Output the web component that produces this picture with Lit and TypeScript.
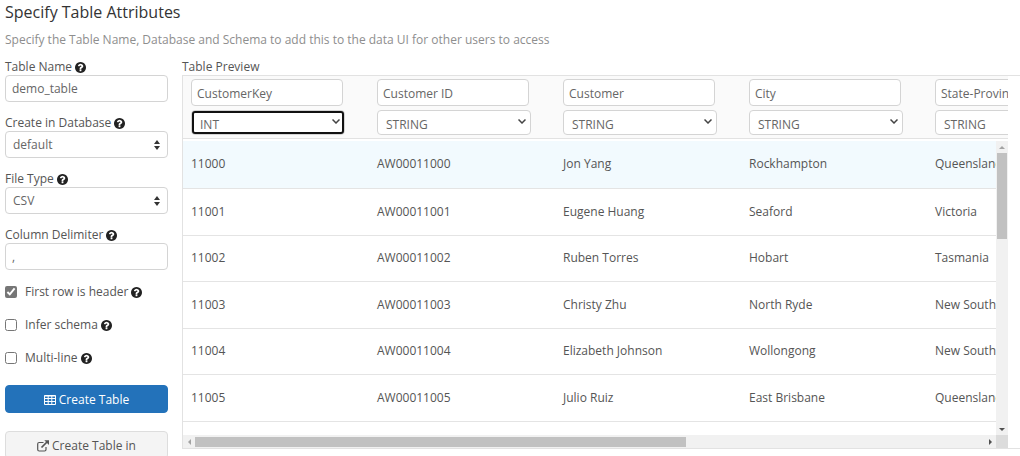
import { LitElement, html, css, svg } from "lit";
import { customElement } from "lit/decorators.js";

const COLUMNS = [
  { name: "CustomerKey", type: "INT" },
  { name: "Customer ID", type: "STRING" },
  { name: "Customer", type: "STRING" },
  { name: "City", type: "STRING" },
  { name: "State-Province", type: "STRING" },
];

const ROWS = [
  ["11000", "AW00011000", "Jon Yang", "Rockhampton", "Queensland"],
  ["11001", "AW00011001", "Eugene Huang", "Seaford", "Victoria"],
  ["11002", "AW00011002", "Ruben Torres", "Hobart", "Tasmania"],
  ["11003", "AW00011003", "Christy Zhu", "North Ryde", "New South Wales"],
  ["11004", "AW00011004", "Elizabeth Johnson", "Wollongong", "New South Wales"],
  ["11005", "AW00011005", "Julio Ruiz", "East Brisbane", "Queensland"],
];

const helpIcon = html`<svg class="help" viewBox="128 128 1536 1536" aria-hidden="true">${svg`<path fill="currentColor" d="M1024 1376v-192q0-14-9-23t-23-9h-192q-14 0-23 9t-9 23v192q0 14 9 23t23 9h192q14 0 23-9t9-23zm256-672q0-88-55.5-163t-138.5-116-170-41q-243 0-371 213-15 24 8 42l132 100q7 6 19 6 16 0 25-12 53-68 86-92 34-24 86-24 48 0 85.5 26t37.5 59q0 38-20 61t-68 45q-63 28-115.5 86.5t-52.5 125.5v36q0 14 9 23t23 9h192q14 0 23-9t9-23q0-19 21.5-49.5t54.5-49.5q32-18 49-28.5t46-35 44.5-48 28-60.5 12.5-81zm384 192q0 209-103 385.5t-279.5 279.5-385.5 103-385.5-103-279.5-279.5-103-385.5 103-385.5 279.5-279.5 385.5-103 385.5 103 279.5 279.5 103 385.5z"/>`}</svg>`;

const sortIcon = html`<svg class="mark sort" viewBox="0 0 6 10" aria-hidden="true"><path fill="currentColor" d="M0 4L3 0L6 4ZM0 6H6L3 10Z"/></svg>`;

const chevronIcon = html`<svg class="mark chevron" viewBox="0 0 8 5" aria-hidden="true"><path fill="none" stroke="currentColor" stroke-width="1.5" d="M.5 .5L4 4L7.5 .5"/></svg>`;

const arrow = (d: string) =>
  html`<svg class="arrow" viewBox="0 0 12 12" aria-hidden="true"><path fill="currentColor" d=${d} /></svg>`;

@customElement("app-root")
export class AppRoot extends LitElement {
  static styles = css`
    :host {
      display: block;
      max-height: 100vh;
      overflow: hidden;
      background: #fff;
      color: #555;
      font: 12px/16px "Open Sans", "Noto Sans", sans-serif;
    }
    * { box-sizing: border-box; }
    h1 {
      margin: 0;
      padding: 0 5px;
      font-size: 16px;
      line-height: 24px;
      font-weight: 400;
      color: #333;
    }
    .intro { margin: 8px 0 10px; padding: 0 5px; color: #8e8e8e; }
    .layout {
      display: grid;
      grid-template-columns: 163px minmax(0, 1fr);
      column-gap: 14px;
      padding-left: 5px;
      align-items: start;
    }
    .form { display: flex; flex-direction: column; }
    .field { display: flex; flex-direction: column; padding-top: 1px; margin-bottom: 12px; }
    .caption { display: flex; align-items: center; gap: 3px; }
    .help { width: 11px; height: 11px; color: #222; }
    input, select, button { font: inherit; color: #666; margin: 0; }
    .box {
      width: 100%;
      height: 27px;
      border: 1px solid #d4d4d4;
      border-radius: 4px;
      background: #fff;
      padding: 0 6px;
      outline: none;
      appearance: none;
    }
    .pick { display: grid; align-items: center; }
    .pick > * { grid-area: 1 / 1; }
    .pick .box { padding: 0 7px; }
    .mark { justify-self: end; pointer-events: none; }
    .sort { width: 6px; height: 10px; margin-right: 8px; color: #333; }
    .chevron { width: 8px; height: 5px; margin: 0 5px 3px 0; color: #444; }
    .checks { display: flex; flex-direction: column; gap: 17px; padding: 2px 0 19px; }
    .tick { display: flex; align-items: center; gap: 8px; height: 16px; }
    .tick input { width: 12px; height: 12px; accent-color: #767676; }
    .actions { display: flex; flex-direction: column; gap: 18px; }
    .btn {
      display: flex;
      align-items: center;
      justify-content: center;
      gap: 3px;
      height: 28px;
      border: 1px solid #ddd;
      border-radius: 4px;
      background: #f4f4f4;
      color: #555;
      padding: 2px 0 0;
    }
    .btn.primary { background: #2372ba; border-color: #2372ba; color: #fff; }
    .btn svg { width: 12px; height: 12px; }
    .preview { min-width: 0; padding-top: 1px; }
    .frame {
      border: 1px solid #e2e2e2;
      border-right: 0;
      padding-right: 12px;
    }
    .head { overflow: hidden; background: #fafafa; border-bottom: 1px solid #e2e2e2; }
    table { table-layout: fixed; border-collapse: collapse; width: 930px; }
    th, td { width: 186px; padding: 0 8px; text-align: left; font-weight: 400; }
    th { padding: 3px 24px 3px 8px; }
    .cell { display: flex; flex-direction: column; gap: 4px; }
    .cell > .box { width: 152px; padding: 1px 5px 0; }
    .cell .pick .box { height: 25px; padding: 4px 8px 0; }
    .current .box { outline: 2px solid #111; outline-offset: -3px; }
    .scroller {
      display: grid;
      grid-template-columns: minmax(0, 1fr) 12px;
      grid-template-rows: 294px 13px;
      padding-top: 2px;
    }
    .body { overflow: hidden; }
    .body td { height: 47px; border-bottom: 1px solid #e4e4e4; }
    .body tr:nth-child(2n + 3) td { height: 46px; }
    .body tr:first-child { background: #f2fafe; }
    .bar { display: flex; background: #f1f1f1; color: #505050; justify-content: space-between; align-items: center; }
    .bar.down { flex-direction: column; }
    .thumb { background: #c1c1c1; }
    .down .thumb { width: 10px; height: 86px; margin-bottom: auto; }
    .across .thumb { height: 10px; width: 60.4%; margin-right: auto; }
    .arrow { width: 12px; height: 12px; flex: none; }
    .arrow:first-child { color: #a3a3a3; }
    .corner { background: #dcdcdc; }
  `;

  private select(id: string, value: string, icon: unknown, label: string) {
    return html`<select class="box" id=${id} aria-label=${label}><option>${value}</option></select>${icon}`;
  }

  private tick(id: string, label: string, checked = false) {
    return html`<div class="tick">
      <input type="checkbox" id=${id} .checked=${checked} />
      <label class="caption" for=${id}>${label} ${helpIcon}</label>
    </div>`;
  }

  render() {
    return html`
      <h1>Specify Table Attributes</h1>
      <p class="intro">Specify the Table Name, Database and Schema to add this to the data UI for other users to access</p>
      <div class="layout">
        <form class="form">
          <div class="field">
            <label class="caption" for="name">Table Name ${helpIcon}</label>
            <input class="box" id="name" .value=${"demo_table"} />
          </div>
          <div class="field">
            <label class="caption" for="db">Create in Database ${helpIcon}</label>
            <div class="pick">${this.select("db", "default", sortIcon, "Create in Database")}</div>
          </div>
          <div class="field">
            <label class="caption" for="type">File Type ${helpIcon}</label>
            <div class="pick">${this.select("type", "CSV", sortIcon, "File Type")}</div>
          </div>
          <div class="field">
            <label class="caption" for="delim">Column Delimiter ${helpIcon}</label>
            <input class="box" id="delim" .value=${","} />
          </div>
          <div class="checks">
            ${this.tick("header", "First row is header", true)}
            ${this.tick("infer", "Infer schema")}
            ${this.tick("multi", "Multi-line")}
          </div>
          <div class="actions">
            <button class="btn primary" type="button">
              <svg viewBox="0 0 12 12" aria-hidden="true"><path fill="none" stroke="currentColor" d="M.5 1.5H11.5V10.5H.5ZM.5 2H11.5M.5 4.5H11.5M.5 7.5H11.5M4.2 2V10.5M7.8 2V10.5"/></svg>
              Create Table
            </button>
            <button class="btn" type="button">
              <svg viewBox="0 0 12 12" aria-hidden="true"><path fill="none" stroke="currentColor" stroke-width="1.2" d="M6.5 2.5H2.2Q.7 2.5 .7 4V9.5Q.7 11 2.2 11H7.5Q9 11 9 9.5V7"/><path fill="none" stroke="currentColor" stroke-width="1.7" d="M4.5 7.5L10 2"/><path fill="currentColor" d="M7.3 .3H12V5Z"/></svg>
              Create Table in
            </button>
          </div>
        </form>
        <section class="preview">
          <div>Table Preview</div>
          <div class="frame">
            <div class="head">
              <table>
                <tr>
                  ${COLUMNS.map((c, i) => html`<th><div class="cell">
                    <input class="box" aria-label="Column name" .value=${c.name} />
                    <div class="pick ${i === 0 ? "current" : ""}">${this.select(`col${i}`, c.type, chevronIcon, c.name)}</div>
                  </div></th>`)}
                </tr>
              </table>
            </div>
            <div class="scroller">
              <div class="body">
                <table>
                  <tbody>
                    ${ROWS.map((r) => html`<tr>${r.map((v) => html`<td>${v}</td>`)}</tr>`)}
                  </tbody>
                </table>
              </div>
              <div class="bar down">${arrow("M3 8L6 5L9 8Z")}<div class="thumb"></div>${arrow("M3 5H9L6 8Z")}</div>
              <div class="bar across">${arrow("M8 3V9L5 6Z")}<div class="thumb"></div>${arrow("M5 3L8 6L5 9Z")}</div>
              <div class="corner"></div>
            </div>
          </div>
        </section>
      </div>
    `;
  }
}
